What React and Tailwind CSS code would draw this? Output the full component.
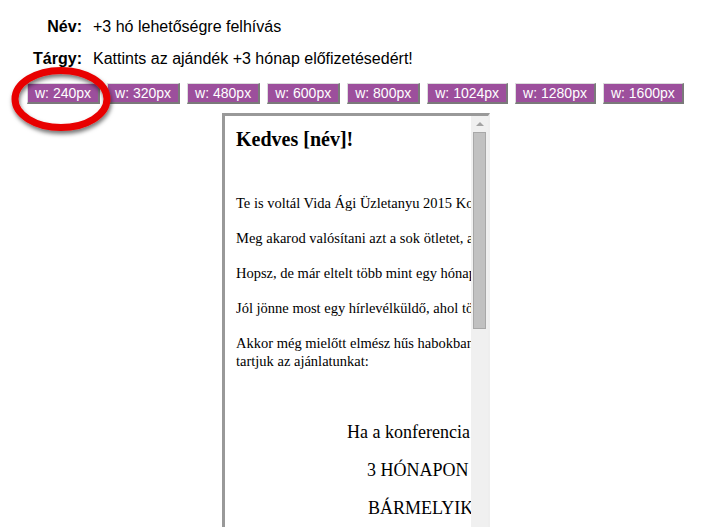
import React from 'react';

const widths = [240, 320, 480, 600, 800, 1024, 1280, 1600];

const paragraphs = [
  'Te is voltál Vida Ági Üzletanyu 2015 Konferenciáján, ugye?',
  'Meg akarod valósítani azt a sok ötletet, amit ott hallottál?',
  'Hopsz, de már eltelt több mint egy hónap azóta...',
  'Jól jönne most egy hírlevélküldő, ahol több ezer feliratkozód lehet?',
];

// Red ring drawn over the first button
const Ring = () => (
  <svg
    className="absolute left-[6px] top-[65px] pointer-events-none"
    width="112"
    height="80"
    viewBox="0 0 112 80"
  >
    <defs>
      <filter id="shadow" x="-20%" y="-20%" width="140%" height="150%">
        <feDropShadow dx="1" dy="3" stdDeviation="2" floodColor="#000" floodOpacity="0.55" />
      </filter>
    </defs>
    <ellipse cx="55" cy="34" rx="46" ry="28.5" fill="none" stroke="#e80000" strokeWidth="7" filter="url(#shadow)" />
  </svg>
);

export default function App() {
  return (
    <div className="relative h-[527px] overflow-hidden bg-white font-['Liberation_Sans',Arial,sans-serif] text-black">
      <div className="pt-[16px]">
        <div className="flex h-[21px] items-center text-[16px]">
          <div className="w-[82px] text-right font-bold">Név:</div>
          <div className="ml-[11px]">+3 hó lehetőségre felhívás</div>
        </div>
        <div className="mt-[11px] flex h-[21px] items-center text-[16px]">
          <div className="w-[82px] text-right font-bold">Tárgy:</div>
          <div className="ml-[11px]">Kattints az ajándék +3 hónap előfizetésedért!</div>
        </div>
      </div>

      <div className="mt-[14px] flex gap-[7px] pl-[27px]">
        {widths.map((w) => (
          <button
            key={w}
            className="h-[21px] border-t border-l border-[#dcdcdc] border-r-2 border-b-2 border-r-[#7a7a7a] border-b-[#7a7a7a] bg-[#9c4f9c] px-[7px] text-[14px] leading-none text-white"
          >
            w: {w}px
          </button>
        ))}
      </div>

      <div className="ml-[222px] mt-[9px] flex h-[440px] w-[268px] border-t-[3px] border-l-[3px] border-[#999] border-r-2 border-r-[#eee]">
        <div className="w-[246px] overflow-hidden font-['Liberation_Serif','Times_New_Roman',serif]">
          <div className="w-[600px] pl-[11px] pt-[11px]">
            <h1 className="text-[20px] font-bold leading-[24px]">Kedves [név]!</h1>
            <div className="mt-[43px] text-[14.5px] leading-[18px]">
              {paragraphs.map((p) => (
                <p key={p} className="mb-[17px] whitespace-nowrap">{p}</p>
              ))}
              <p className="mb-[17px]">
                Akkor még mielőtt elmész hűs habokban hűsölni, nézd meg, mire
                <br />
                tartjuk az ajánlatunkat:
              </p>
            </div>
            <div className="mt-[51px] text-[18px] leading-[22px]">
              <p className="whitespace-nowrap pl-[111px]">Ha a konferencia résztvevője voltál,</p>
              <p className="mt-[16px] whitespace-nowrap pl-[131px]">3 HÓNAPON KERESZTÜL</p>
              <p className="mt-[16px] whitespace-nowrap pl-[132px]">BÁRMELYIK CSOMAGUNK</p>
            </div>
          </div>
        </div>
        <div className="flex w-[17px] flex-col items-center bg-[#f0f0f0]">
          <div className="mt-[6px] h-0 w-0 border-x-[4px] border-b-[4px] border-x-transparent border-b-[#a3a3a3]" />
          <div className="mt-[6px] h-[197px] w-[13px] border border-[#a8a8a8] bg-[#c1c1c1]" />
        </div>
      </div>

      <Ring />
    </div>
  );
}
